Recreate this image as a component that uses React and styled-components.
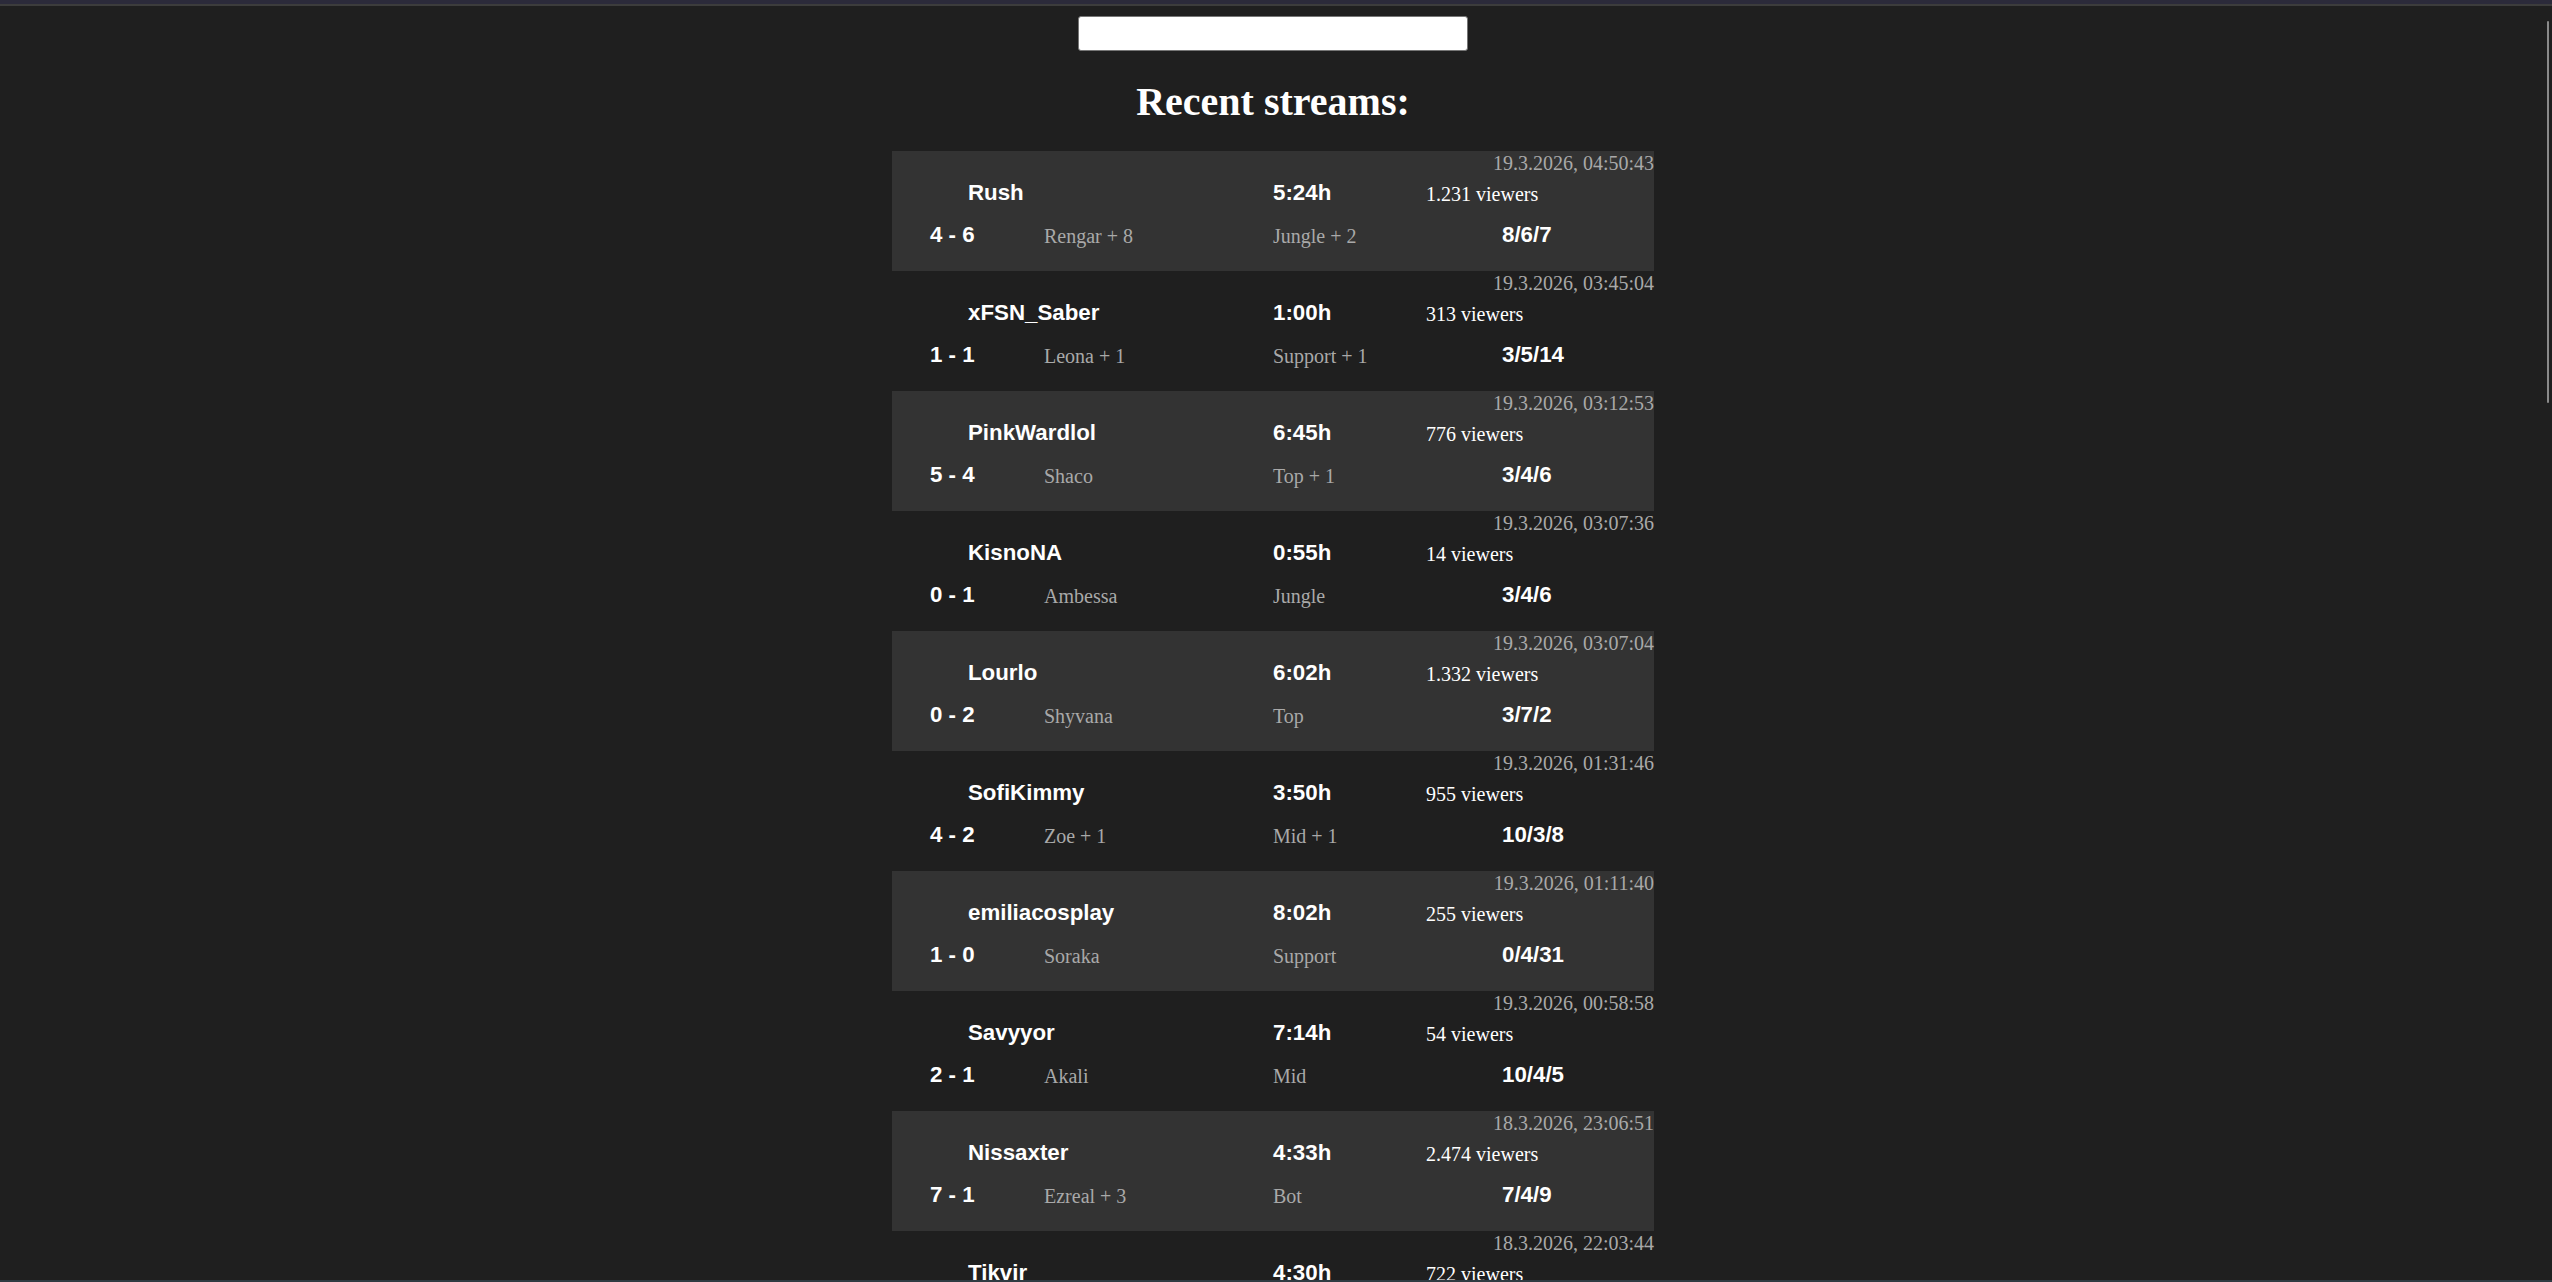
import React from "react";
import styled, { createGlobalStyle } from "styled-components";

const GlobalStyle = createGlobalStyle`
  html, body {
    margin: 0;
    padding: 0;
    background: #1f1f1f;
    overflow: hidden;
    height: 100%;
  }
  body {
    font-family: "Liberation Serif", "Times New Roman", serif;
    color: #ffffff;
  }
`;

const TopBar = styled.div`
  height: 4px;
  background: #2b2a3a;
  border-bottom: 2px solid #3c3c3c;
`;

const BottomBar = styled.div`
  position: fixed;
  left: 0;
  right: 0;
  bottom: 0;
  height: 2px;
  background: #2f3b42;
`;

const ScrollThumb = styled.div`
  position: fixed;
  top: 21px;
  right: 3px;
  width: 2px;
  height: 382px;
  border-radius: 1px;
  background: #8a8a8a;
`;

const Page = styled.main`
  padding: 10px 16px 0 10px;
  display: flex;
  flex-direction: column;
  align-items: center;
`;

const SearchInput = styled.input`
  box-sizing: border-box;
  width: 390px;
  height: 35px;
  border: 1px solid #767676;
  border-radius: 3px;
  background: #ffffff;
  outline: none;
  padding: 1px 3px;
  font-size: 17px;
`;

const Title = styled.h1`
  margin: 26.8px 0 25.8px;
  font-family: "Liberation Serif", "Times New Roman", serif;
  font-size: 40px;
  font-weight: bold;
  line-height: normal;
  color: #ffffff;
  text-align: center;
`;

const List = styled.div`
  width: 762px;
  display: flex;
  flex-direction: column;
`;

const Row = styled.div`
  box-sizing: border-box;
  height: 120px;
  display: grid;
  grid-template-columns: 38px 38px 76px 229px 153px 76px 1fr;
  grid-template-rows: 24px 31.5px 42px 1fr;
  align-items: end;
  background: ${(p) => (p.$shaded ? "#333333" : "transparent")};
`;

const Cell = styled.div`
  grid-row: ${(p) => p.$row};
  grid-column: ${(p) => p.$col};
  line-height: normal;
  white-space: nowrap;
`;

const DateText = styled(Cell)`
  justify-self: end;
  font-family: "Liberation Serif", "Times New Roman", serif;
  font-size: 20px;
  color: #a9a9a9;
`;

const Strong = styled(Cell)`
  font-family: "Liberation Sans", Arial, sans-serif;
  font-size: 22.3px;
  font-weight: bold;
  color: #ffffff;
`;

const Plain = styled(Cell)`
  font-family: "Liberation Serif", "Times New Roman", serif;
  font-size: 20px;
  color: ${(p) => (p.$muted ? "#a9a9a9" : "#ffffff")};
`;

const streams = [
  ["19.3.2026, 04:50:43", "Rush", "5:24h", "1.231 viewers", "4 - 6", "Rengar + 8", "Jungle + 2", "8/6/7"],
  ["19.3.2026, 03:45:04", "xFSN_Saber", "1:00h", "313 viewers", "1 - 1", "Leona + 1", "Support + 1", "3/5/14"],
  ["19.3.2026, 03:12:53", "PinkWardlol", "6:45h", "776 viewers", "5 - 4", "Shaco", "Top + 1", "3/4/6"],
  ["19.3.2026, 03:07:36", "KisnoNA", "0:55h", "14 viewers", "0 - 1", "Ambessa", "Jungle", "3/4/6"],
  ["19.3.2026, 03:07:04", "Lourlo", "6:02h", "1.332 viewers", "0 - 2", "Shyvana", "Top", "3/7/2"],
  ["19.3.2026, 01:31:46", "SofiKimmy", "3:50h", "955 viewers", "4 - 2", "Zoe + 1", "Mid + 1", "10/3/8"],
  ["19.3.2026, 01:11:40", "emiliacosplay", "8:02h", "255 viewers", "1 - 0", "Soraka", "Support", "0/4/31"],
  ["19.3.2026, 00:58:58", "Savyyor", "7:14h", "54 viewers", "2 - 1", "Akali", "Mid", "10/4/5"],
  ["18.3.2026, 23:06:51", "Nissaxter", "4:33h", "2.474 viewers", "7 - 1", "Ezreal + 3", "Bot", "7/4/9"],
  ["18.3.2026, 22:03:44", "Tikvir", "4:30h", "722 viewers", "3 - 2", "Kayle + 1", "Top", "5/2/6"],
];

function StreamRow({ data, shaded }) {
  const [date, name, duration, viewers, score, champ, role, kda] = data;
  return (
    <Row $shaded={shaded}>
      <DateText $row="1" $col="1 / -1">{date}</DateText>
      <Strong $row="2" $col="3 / 5">{name}</Strong>
      <Strong $row="2" $col="5">{duration}</Strong>
      <Plain $row="2" $col="6 / -1">{viewers}</Plain>
      <Strong $row="3" $col="2 / 4">{score}</Strong>
      <Plain $row="3" $col="4" $muted>{champ}</Plain>
      <Plain $row="3" $col="5" $muted>{role}</Plain>
      <Strong $row="3" $col="7">{kda}</Strong>
    </Row>
  );
}

export default function App() {
  return (
    <>
      <GlobalStyle />
      <TopBar />
      <Page>
        <SearchInput type="text" aria-label="Search" />
        <Title>Recent streams:</Title>
        <List>
          {streams.map((s, i) => (
            <StreamRow key={i} data={s} shaded={i % 2 === 0} />
          ))}
        </List>
      </Page>
      <ScrollThumb />
      <BottomBar />
    </>
  );
}
